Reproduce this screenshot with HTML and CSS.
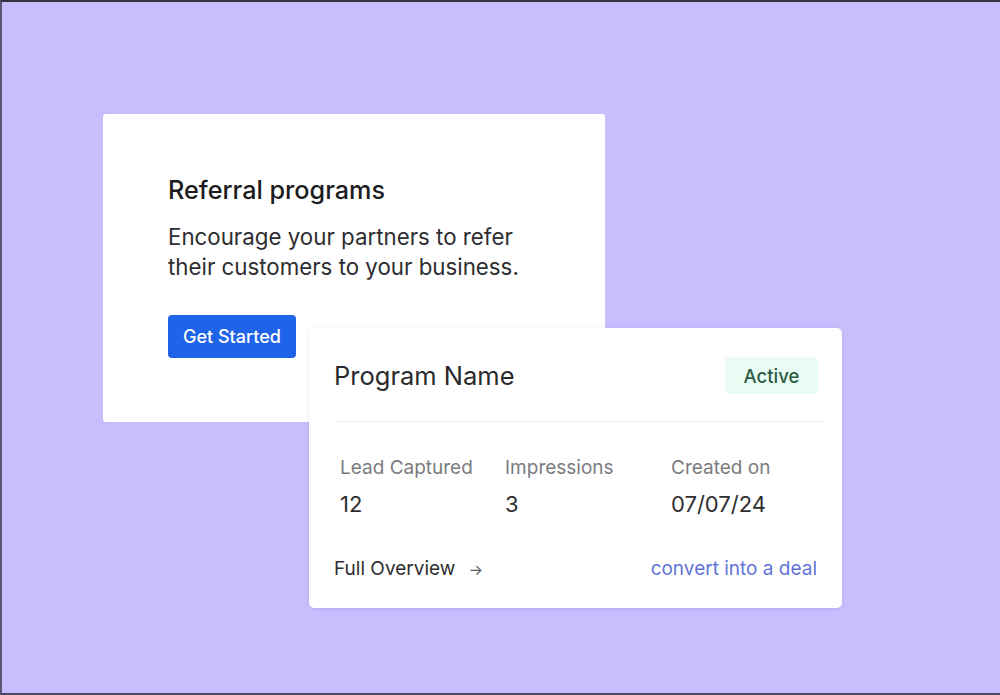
FILE: index.html
```html
<!DOCTYPE html>
<html lang="en">
<head>
  <meta charset="UTF-8" />
  <meta name="viewport" content="width=device-width, initial-scale=1" />
  <title>Referral programs</title>
  <link rel="stylesheet" href="styles.css">
</head>
<body>

  <div class="scene">
    <div class="intro-card">
      <h2>Referral programs</h2>
      <p>Encourage your partners to refer their customers to your business.</p>
      <button class="btn-primary">Get Started</button>
    </div>

    <div class="program-card">
      <div class="program-head">
        <h3>Program Name</h3>
        <span class="badge">Active</span>
      </div>

      <div class="stats">
        <div class="stat">
          <span class="stat-label">Lead Captured</span>
          <span class="stat-value">12</span>
        </div>
        <div class="stat">
          <span class="stat-label">Impressions</span>
          <span class="stat-value">3</span>
        </div>
        <div class="stat">
          <span class="stat-label">Created on</span>
          <span class="stat-value">07/07/24</span>
        </div>
      </div>

      <div class="program-foot">
        <a class="overview" href="#">Full Overview <span class="arrow">&rarr;</span></a>
        <a class="convert" href="#">convert into a deal</a>
      </div>
    </div>
  </div>

</body>
</html>
```

FILE: styles.css
```css
html, body {
  margin: 0;
  height: 695px;
}
body {
  box-sizing: border-box;
  font-family: Inter, "Noto Sans", sans-serif;
  background: #c7befd;
  border-top: 2px solid #34323f;
  border-left: 2px solid #5a5570;
  border-bottom: 2px solid #4a4660;
  padding: 112px 0 0 101px;
  overflow: hidden;
}

/* two cards overlapping on a grid */
.scene {
  display: grid;
  grid-template-columns: 206px 296px 237px;
  grid-template-rows: 214px 94px 186px;
}

.intro-card {
  grid-column: 1 / 3;
  grid-row: 1 / 3;
  background: #fff;
  border-radius: 3px;
  padding: 61px 50px 0 65px;
}
.intro-card h2 {
  margin: 0;
  font-size: 25.2px;
  line-height: 30px;
  font-weight: 500;
  color: #1c1c1e;
}
.intro-card p {
  margin: 17px 0 0;
  font-size: 22.3px;
  line-height: 30px;
  color: #2e2e30;
  max-width: 375px;
}
.btn-primary {
  margin-top: 33px;
  width: 128px;
  height: 43px;
  border: none;
  border-radius: 4px;
  background: #1f64e8;
  color: #fff;
  font-family: inherit;
  font-size: 18px;
  font-weight: 500;
}

.program-card {
  grid-column: 2 / 4;
  grid-row: 2 / 4;
  z-index: 1;
  background: #fff;
  border-radius: 5px;
  box-shadow: 0 1px 4px rgba(60, 40, 140, 0.12);
  padding: 29px 18px 0 25px;
}
.program-head {
  display: flex;
  align-items: center;
  justify-content: space-between;
  padding-right: 6px;
  padding-bottom: 27px;
  border-bottom: 1px solid #ececef;
}
.program-head h3 {
  margin: 0;
  font-size: 25.5px;
  font-weight: 400;
  color: #2a2a2c;
}
.badge {
  display: flex;
  align-items: center;
  justify-content: center;
  width: 93px;
  height: 37px;
  border-radius: 4px;
  background: #e9fcf3;
  color: #2c5a46;
  font-size: 18.5px;
  font-weight: 500;
}

.stats {
  display: grid;
  grid-template-columns: 165px 166px 1fr;
  padding: 34px 0 0 6px;
}
.stat {
  display: flex;
  flex-direction: column;
  gap: 9px;
}
.stat-label {
  font-size: 19px;
  line-height: 24px;
  color: #7b7b80;
}
.stat-value {
  font-size: 22px;
  line-height: 30px;
  color: #2e2e30;
}

.program-foot {
  display: flex;
  justify-content: space-between;
  margin-top: 37px;
  padding-right: 7px;
  font-size: 19px;
  line-height: 26px;
}
.program-foot a {
  text-decoration: none;
}
.overview {
  color: #2e2e30;
}
.overview .arrow {
  margin-left: 8px;
  font-size: 15px;
  color: #555;
}
.convert {
  color: #6174d9;
}
```
